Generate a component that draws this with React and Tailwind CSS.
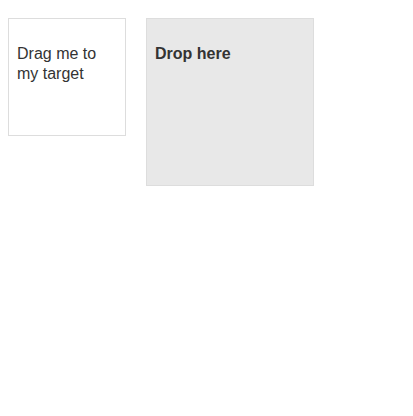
export default function App() {
  return (
    <div className="min-h-screen bg-white font-['Liberation_Sans',Arial,sans-serif] text-[#333] text-base leading-5">
      <div className="flex items-start pl-2 pt-[18px] gap-5">
        {/* draggable */}
        <div className="w-[118px] h-[118px] border border-[#ddd] bg-white p-2">
          <p className="mt-[17px]">Drag me to my target</p>
        </div>
        {/* drop target */}
        <div className="w-[168px] h-[168px] border border-[#ddd] bg-[#e8e8e8] p-2">
          <p className="mt-[17px] font-bold">Drop here</p>
        </div>
      </div>
    </div>
  )
}
